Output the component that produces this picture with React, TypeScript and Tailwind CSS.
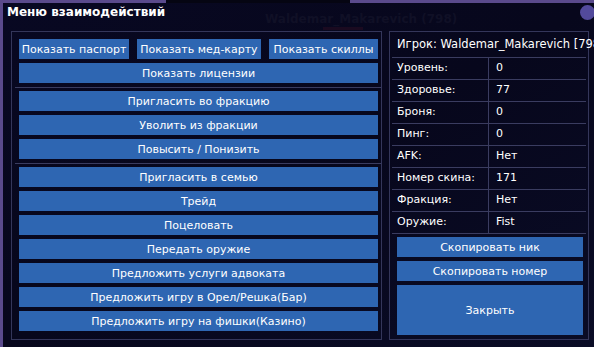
import React from 'react';

const font = { fontFamily: '"DejaVu Sans", Verdana, sans-serif' };

const Btn: React.FC<{ label: string; className?: string }> = ({ label, className = '' }) => (
  <div
    className={`h-[20px] bg-[#2e66b2] text-white text-[11px] leading-none flex items-center justify-center whitespace-nowrap ${className}`}
  >
    {label}
  </div>
);

const stats: [string, string][] = [
  ['Уровень:', '0'],
  ['Здоровье:', '77'],
  ['Броня:', '0'],
  ['Пинг:', '0'],
  ['AFK:', 'Нет'],
  ['Номер скина:', '171'],
  ['Фракция:', 'Нет'],
  ['Оружие:', 'Fist'],
];

export default function App() {
  return (
    <div
      className="w-[594px] h-[347px] flex flex-col overflow-hidden bg-[#07071c] text-white relative"
      style={font}
    >
      {/* top edge */}
      <div className="h-[3px] flex shrink-0">
        <div className="w-[166px] bg-[#5a4a8c]" />
        <div className="w-[184px] bg-[#050512]" />
        <div className="flex-1 bg-[#5a4a8c]" />
      </div>

      <div className="flex-1 flex border-l-[3px] border-[#5a4a8c] bg-gradient-to-br from-[#080822] via-[#07071c] to-[#0a0c26]">
        <div className="flex-1 flex flex-col">
          {/* title row */}
          <div className="h-[28px] flex items-center relative">
            <span className="ml-[4px] -mt-[10px] text-[12px] font-bold">Меню взаимодействий</span>
            <span className="absolute left-[262px] top-[7px] text-[12px] font-bold text-[#101026]">
              Waldemar_Makarevich (798)
            </span>
            <div className="absolute left-[320px] top-[24px] w-[40px] h-[3px] bg-[#1a0a20]" />
            <div className="absolute right-[0px] top-[2px] w-[15px] h-[15px] rounded-full bg-[#534a9c]" />
          </div>

          <div className="flex gap-[7px] pl-[8px] pr-[6px]">
            {/* left panel */}
            <div className="w-[371px] h-[309px] border border-[#34365a] pt-[7px] pb-[8px] flex flex-col">
              <div className="pl-[7px] pr-[3px] flex flex-col gap-[4px]">
                <div className="flex gap-[8px]">
                  <Btn label="Показать паспорт" className="w-[110px]" />
                  <Btn label="Показать мед-карту" className="w-[124px]" />
                  <Btn label="Показать скиллы" className="flex-1" />
                </div>
                <Btn label="Показать лицензии" />
              </div>
              <div className="mt-[4px] mb-[3px] ml-[3px] h-px bg-[#3a3c60]" />
              <div className="pl-[7px] pr-[3px] flex flex-col gap-[4px]">
                <Btn label="Пригласить во фракцию" />
                <Btn label="Уволить из фракции" />
                <Btn label="Повысить / Понизить" />
              </div>
              <div className="mt-[4px] mb-[3px] ml-[3px] h-px bg-[#3a3c60]" />
              <div className="pl-[7px] pr-[3px] flex flex-col gap-[4px]">
                <Btn label="Пригласить в семью" />
                <Btn label="Трейд" />
                <Btn label="Поцеловать" />
                <Btn label="Передать оружие" />
                <Btn label="Предложить услуги адвоката" />
                <Btn label="Предложить игру в Орел/Решка(Бар)" />
                <Btn label="Предложить игру на фишки(Казино)" />
              </div>
            </div>

            {/* right panel */}
            <div className="w-[200px] h-[309px] border border-[#34365a] flex flex-col">
              <div className="h-[25px] flex items-center pl-[7px] text-[11.5px] whitespace-nowrap">
                Игрок: Waldemar_Makarevich [798]
              </div>
              <div className="mx-[2px] border-t border-[#3a3c60]">
                {stats.map(([k, v]) => (
                  <div key={k} className="h-[22px] flex border-b border-[#3a3c60] text-[11px]">
                    <div className="w-[97px] border-r border-[#3a3c60] flex items-center pl-[5px]">{k}</div>
                    <div className="flex-1 flex items-center pl-[7px]">{v}</div>
                  </div>
                ))}
              </div>
              <div className="flex flex-col gap-[4px] pt-[3px] pl-[7px] pr-[5px]">
                <Btn label="Скопировать ник" />
                <Btn label="Скопировать номер" />
                <Btn label="Закрыть" className="h-[50px]" />
              </div>
            </div>
          </div>
        </div>
      </div>
    </div>
  );
}
